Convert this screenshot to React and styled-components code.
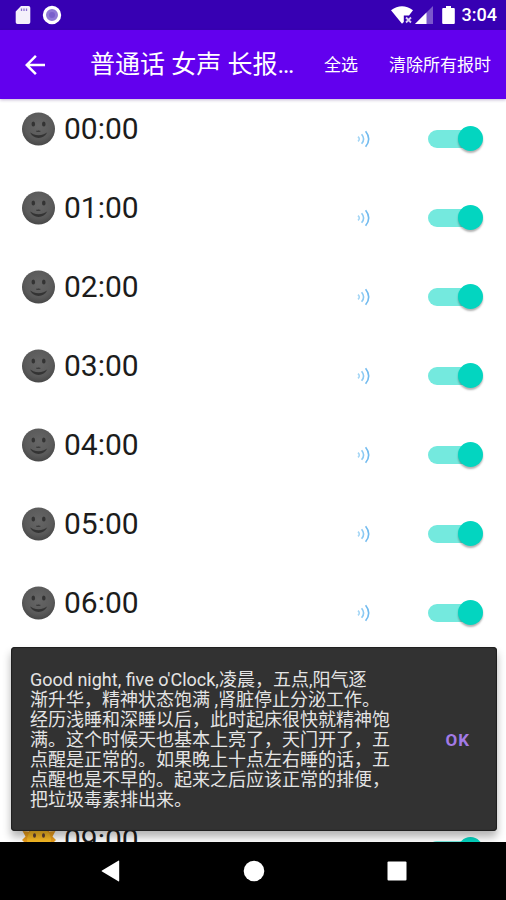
import React, { useState } from 'react'
import styled, { createGlobalStyle } from 'styled-components'

const HOURS = Array.from({ length: 24 }, (_, i) => `${String(i).padStart(2, '0')}:00`)

const MESSAGE =
  "Good night, five o'Clock,凌晨，五点,阳气逐\n渐升华，精神状态饱满 ,肾脏停止分泌工作。\n经历浅睡和深睡以后，此时起床很快就精神饱满。这个时候天也基本上亮了，天门开了，五点醒是正常的。如果晚上十点左右睡的话，五点醒也是不早的。起来之后应该正常的排便，把垃圾毒素排出来。"

const MoonFace = () => (
  <svg width="34" height="34" viewBox="0 0 34 34" aria-hidden="true">
    <defs>
      <radialGradient id="moon" cx="0.5" cy="0.4" r="0.6">
        <stop offset="0" stopColor="#666" />
        <stop offset="0.7" stopColor="#5a5a5a" />
        <stop offset="1" stopColor="#484848" />
      </radialGradient>
    </defs>
    <circle cx="16.5" cy="17" r="16.5" fill="url(#moon)" />
    <ellipse cx="11.3" cy="12" rx="1.8" ry="2.6" fill="#333" />
    <ellipse cx="21.8" cy="12" rx="1.8" ry="2.6" fill="#333" />
    <path d="M14.3 18.8q1 1.2 2 .2q1 1 2-.2" stroke="#3c3c3c" strokeWidth="1.2" fill="none" />
    <path d="M8 20.6q1.6.8 3.2 1.6q5.300 2 10.600 0l3.400-1.600q-3 5.400-8.600 5.400T8 20.600z" fill="#333" />
  </svg>
)

const SunFace = () => (
  <svg width="34" height="34" viewBox="0 0 34 34" aria-hidden="true">
    <path
      d="M17 1l3.500 4L26 3l1 5.500 6.500-.5-3 5.500 3.500 3.500-3.500 3.500 3 5.500-6.500-.5-1 6-5.500-2-3.500 4-3.500-4-5.500 2-1-6-6.500.5 3-5.500L0 17l3.500-3.500L.5 8l6.500.5L8 3l5.500 2z"
      fill="#eb9e1c"
    />
    <circle cx="17" cy="17" r="12" fill="#f7b924" />
    <ellipse cx="12.500" cy="12.500" rx="1.500" ry="2.200" fill="#5d4037" />
    <ellipse cx="21.500" cy="12.500" rx="1.500" ry="2.200" fill="#5d4037" />
    <path d="M10.500 19.500q6.500 6 13 0" stroke="#8d5a1b" strokeWidth="1.500" fill="none" />
  </svg>
)

const SoundWaves = () => (
  <svg width="14" height="18" viewBox="0 0 14 18" fill="none" stroke="#8ccaf3" strokeWidth="1.600" aria-hidden="true">
    <path d="M1 6.600q2.600 2.400 0 4.800" strokeOpacity="0.8" />
    <path d="M4.600 4.200q4 4.800 0 9.600" />
    <path d="M8.600 1.200q6.200 7.800 0 15.600" stroke="#72bbef" />
  </svg>
)

const App = () => {
  const [enabled, setEnabled] = useState(HOURS.map(() => true))
  const [open, setOpen] = useState(true)

  const toggle = (index) => {
    setEnabled(enabled.map((on, i) => (i === index ? !on : on)))
  }

  return (
    <Screen>
      <GlobalStyle />
      <StatusBar>
        <svg width="16" height="20" viewBox="0 0 16 20" aria-hidden="true">
          <path d="M6 1h7.500a1.800 1.800 0 0 1 1.800 1.800v14.400a1.800 1.800 0 0 1-1.800 1.800h-11A1.800 1.800 0 0 1 .7 17.200V6.500z" fill="#f4f0fb" />
          <path d="M6.500 3.500v2.500M9 3.500v2.500M11.500 3.500v2.500" stroke="#8a6fd0" strokeWidth="1.300" />
        </svg>
        <RecordIcon width="20" height="20" viewBox="0 0 20 20" aria-hidden="true">
          <circle cx="10" cy="10" r="7.600" fill="#8f78d6" stroke="#fff" strokeWidth="3.200" />
          <circle cx="10" cy="10" r="3" fill="#7a5fcc" />
        </RecordIcon>
        <svg width="22" height="18" viewBox="0 0 22 18" aria-hidden="true">
          <path d="M0 4.200Q11-3.600 22 4.200L18 9.500H12.800V16L11 17.800z" fill="#fff" />
          <path d="M15 11.500l5 5M20 11.500l-5 5" stroke="#d9cff3" strokeWidth="1.800" />
        </svg>
        <SignalIcon width="18" height="18" viewBox="0 0 18 18" aria-hidden="true">
          <path d="M18 0v18H0z" fill="#7b58cc" />
          <path d="M11.500 6.500V18H0z" fill="#fff" />
        </SignalIcon>
        <BatteryIcon width="13" height="20" viewBox="0 0 13 20" aria-hidden="true">
          <path d="M4 1h5v2h2.800a1 1 0 0 1 1 1v14a1 1 0 0 1-1 1H1.200a1 1 0 0 1-1-1V4a1 1 0 0 1 1-1H4z" fill="#fff" />
        </BatteryIcon>
        <Clock>3:04</Clock>
      </StatusBar>

      <Toolbar>
        <ToolButton aria-label="返回">
          <svg width="30" height="30" viewBox="0 0 24 24" fill="#fff" aria-hidden="true">
            <path d="M20 11H7.830l5.590-5.590L12 4l-8 8 8 8 1.410-1.410L7.830 13H20z" />
          </svg>
        </ToolButton>
        <Title>普通话 女声 长报时</Title>
        <Actions>
          <ToolButton onClick={() => setEnabled(HOURS.map(() => true))}>全选</ToolButton>
          <ToolButton onClick={() => setEnabled(HOURS.map(() => false))}>清除所有报时</ToolButton>
        </Actions>
      </Toolbar>

      <Content>
        <List>
          {HOURS.map((hour, i) => (
            <Row key={hour}>
              <HourLabel htmlFor={`hour-${i}`}>
                {i < 7 ? <MoonFace /> : <SunFace />}
                {hour}
              </HourLabel>
              <PlayButton aria-label={`试听 ${hour}`} onClick={() => setOpen(true)}>
                <SoundWaves />
              </PlayButton>
              <Switch type="checkbox" id={`hour-${i}`} checked={enabled[i]} onChange={() => toggle(i)} />
            </Row>
          ))}
        </List>
        {open && (
          <Snackbar role="status">
            <Message>{MESSAGE}</Message>
            <OkButton onClick={() => setOpen(false)}>OK</OkButton>
          </Snackbar>
        )}
      </Content>

      <NavBar>
        <NavButton aria-label="Back">
          <svg width="20" height="22" viewBox="0 0 20 22" fill="#fff" aria-hidden="true">
            <path d="M18.200 1.200v19.600a.6.6 0 0 1-.9.5L1 11.600a.7.7 0 0 1 0-1.200L17.300.7a.6.6 0 0 1 .9.500z" />
          </svg>
        </NavButton>
        <NavButton aria-label="Home">
          <svg width="22" height="22" viewBox="0 0 22 22" fill="#fff" aria-hidden="true">
            <circle cx="11" cy="11" r="10.300" />
          </svg>
        </NavButton>
        <NavButton aria-label="Overview">
          <svg width="20" height="20" viewBox="0 0 20 20" fill="#fff" aria-hidden="true">
            <rect x="0.500" y="0.500" width="19" height="19" rx="1" />
          </svg>
        </NavButton>
      </NavBar>
    </Screen>
  )
}

const GlobalStyle = createGlobalStyle`
    * {
        box-sizing: border-box;
    }

    body {
        margin: 0;
        background: #fff;
        font-family: Roboto, "Noto Sans CJK SC", sans-serif;
    }

    button {
        display: flex;
        align-items: center;
        justify-content: center;
        padding: 0;
        border: 0;
        background: none;
        color: inherit;
        font-family: inherit;
        cursor: pointer;
    }

    svg {
        display: block;
        flex-shrink: 0;
    }
`

const Screen = styled.div`
    display: flex;
    flex-direction: column;
    height: 100vh;
`

const StatusBar = styled.header`
    display: flex;
    align-items: center;
    flex-shrink: 0;
    height: 30px;
    padding: 0 9px 0 15px;
    background: #3700b3;
    color: #fff;
`

const RecordIcon = styled.svg`
    margin-left: 11px;
    margin-right: auto;
`

const SignalIcon = styled.svg`
    margin-left: 2px;
`

const BatteryIcon = styled.svg`
    margin-left: 9px;
`

const Clock = styled.span`
    margin-left: 7px;
    font-size: 18px;
    font-weight: 500;
    line-height: 32px;
`

const Toolbar = styled.nav`
    display: flex;
    align-items: center;
    flex-shrink: 0;
    z-index: 1;
    height: 69px;
    padding: 0 15px 0 20px;
    background: #6200ee;
    color: #fff;
    box-shadow: 0 1px 3px rgba(60, 20, 110, 0.3);
`

const Title = styled.h1`
    flex: 1;
    min-width: 0;
    margin: 0 24px 0 40px;
    overflow: hidden;
    font-size: 25px;
    font-weight: 400;
    line-height: 36px;
    text-overflow: ellipsis;
    white-space: nowrap;
`

const Actions = styled.div`
    display: flex;
    gap: 31px;
`

const ToolButton = styled.button`
    flex-shrink: 0;
    font-size: 17px;
    font-weight: 400;
    line-height: 24px;
    white-space: nowrap;
`

const Content = styled.main`
    position: relative;
    flex: 1;
    min-height: 0;
`

const List = styled.ul`
    height: 100%;
    margin: 0;
    padding: 0;
    overflow-y: auto;
    list-style: none;
    scrollbar-width: none;
`

const Row = styled.li`
    display: flex;
    align-items: center;
    height: 79px;
    padding: 0 23px 0 22px;
`

const HourLabel = styled.label`
    display: flex;
    flex: 1;
    align-items: center;
    align-self: flex-start;
    gap: 8px;
    padding-top: 10px;
    color: #1c1c1c;
    font-size: 30px;
    line-height: 40px;
`

const PlayButton = styled.button`
    margin-right: 57px;
`

const Switch = styled.input`
    display: grid;
    align-items: center;
    appearance: none;
    width: 55px;
    height: 26px;
    margin: 0;
    cursor: pointer;

    &::before {
        grid-area: 1 / 1;
        width: 48px;
        height: 18px;
        border-radius: 9px;
        background: #b9b9b9;
        content: "";
    }

    &::after {
        grid-area: 1 / 1;
        width: 25px;
        height: 25px;
        border-radius: 50%;
        background: #ececec;
        box-shadow: 0 2px 2px rgba(0, 0, 0, 0.3);
        content: "";
    }

    &:checked::before {
        background: #74e9de;
    }

    &:checked::after {
        justify-self: end;
        background: #03d5c0;
    }
`

const Snackbar = styled.div`
    position: absolute;
    right: 9px;
    bottom: 11px;
    left: 11px;
    display: flex;
    align-items: center;
    justify-content: space-between;
    padding: 23px 27px 21px 19px;
    border-radius: 4px;
    background: #323232;
    box-shadow: inset 0 0 1px 1px #1e1e1e, 0 6px 8px rgba(0, 0, 0, 0.3);
`

const Message = styled.p`
    width: 360px;
    margin: 0;
    color: #e4e4e4;
    font-size: 18px;
    line-height: 20px;
    white-space: pre-line;
`

const OkButton = styled.button`
    color: #a27ae6;
    font-size: 17px;
    font-weight: 700;
    letter-spacing: 1px;
    line-height: 24px;
`

const NavBar = styled.footer`
    display: flex;
    flex-shrink: 0;
    height: 58px;
    padding: 0 38px 0 40px;
    background: #000;
`

const NavButton = styled.button`
    flex: 1;
`

export default App
